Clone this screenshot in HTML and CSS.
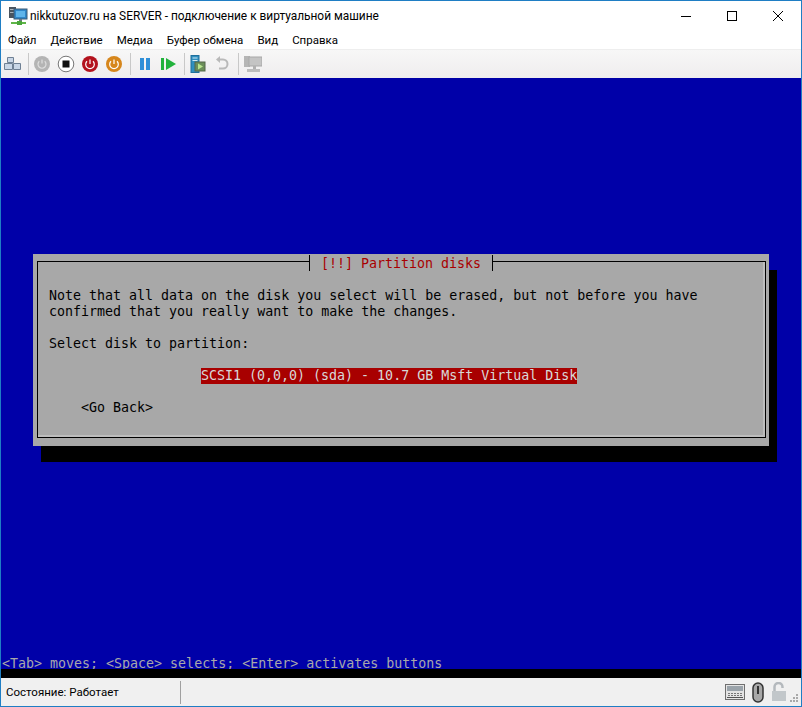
FILE: index.html
```html
<!DOCTYPE html>
<html lang="ru">
<head>
<meta charset="utf-8">
<title>nikkutuzov.ru на SERVER</title>
<link rel="stylesheet" href="styles.css">
</head>
<body>
<div class="window">
  <header class="titlebar">
    <svg class="app-icon" width="20" height="20" viewBox="0 0 20 20">
      <rect x="1" y="1" width="7" height="11" fill="#4a5560"/>
      <rect x="2" y="3" width="5" height="1" fill="#aab4bc"/>
      <rect x="2" y="6" width="5" height="1" fill="#aab4bc"/>
      <rect x="6" y="3" width="13" height="10" fill="#2f86c9" stroke="#3c5a74" stroke-width="1"/>
      <rect x="8" y="5" width="9" height="6" fill="#5fb4ea"/>
      <rect x="11" y="13" width="3" height="3" fill="#6a7884"/>
      <rect x="3" y="16" width="15" height="2" fill="#5fb548"/>
      <rect x="9" y="15" width="5" height="4" fill="#4aa53a"/>
    </svg>
    <span class="title-text">nikkutuzov.ru на SERVER - подключение к виртуальной машине</span>
    <div class="caption">
      <span class="cap-btn"><svg width="12" height="12" viewBox="0 0 12 12"><path d="M1 6.5h10" stroke="#000" fill="none"/></svg></span>
      <span class="cap-btn"><svg width="12" height="12" viewBox="0 0 12 12"><rect x="1.5" y="1.5" width="9" height="9" stroke="#000" fill="none"/></svg></span>
      <span class="cap-btn"><svg width="12" height="12" viewBox="0 0 12 12"><path d="M1 1l10 10M11 1L1 11" stroke="#000" fill="none"/></svg></span>
    </div>
  </header>
  <nav class="menubar">
    <span class="menu-item">Файл</span>
    <span class="menu-item">Действие</span>
    <span class="menu-item">Медиа</span>
    <span class="menu-item">Буфер обмена</span>
    <span class="menu-item">Вид</span>
    <span class="menu-item">Справка</span>
  </nav>
  <div class="toolbar">
    <span class="tool"><svg width="18" height="16" viewBox="0 0 18 16"><path d="M3.5 1.5h6v5h-6zM.5 7.5h8v6h-8zM9.5 7.5h7v6h-7z" fill="#c9d6e6" stroke="#6f8094"/></svg></span>
    <span class="sep sep-tight"></span>
    <span class="tool"><svg width="18" height="18" viewBox="0 0 18 18"><circle cx="9" cy="9" r="8" fill="#b4b4b4"/><path d="M9 4.5v4M6.3 6.3a4 4 0 1 0 5.4 0" stroke="#dedede" stroke-width="1.2" fill="none"/></svg></span>
    <span class="tool"><svg width="18" height="18" viewBox="0 0 18 18"><circle cx="9" cy="9" r="7.8" fill="#fff" stroke="#777" stroke-width="1"/><rect x="5.5" y="5.5" width="7" height="7" fill="#111"/></svg></span>
    <span class="tool"><svg width="18" height="18" viewBox="0 0 18 18"><circle cx="9" cy="9" r="8" fill="#b3121d"/><path d="M9 4.5v4.500M6 6.200a4.300 4.300 0 1 0 6 0" stroke="#fff" stroke-width="1.200" fill="none"/></svg></span>
    <span class="tool"><svg width="18" height="18" viewBox="0 0 18 18"><circle cx="9" cy="9" r="8" fill="#d6861c"/><path d="M9 4.500v4.500M6 6.200a4.300 4.300 0 1 0 6 0" stroke="#fff" stroke-width="1.200" fill="none"/></svg></span>
    <span class="sep"></span>
    <span class="tool"><svg width="12" height="12" viewBox="0 0 12 12"><path d="M1 0h4v12H1zM7 0h4v12H7z" fill="#2f8fd8"/></svg></span>
    <span class="tool"><svg width="16" height="12" viewBox="0 0 16 12"><path d="M0 0h3v12H0zM5 0l10 6-10 6z" fill="#22b23c"/></svg></span>
    <span class="sep sep-tight"></span>
    <span class="tool"><svg width="16" height="18" viewBox="0 0 16 18"><rect x="1" y="0.500" width="8" height="17" fill="#2f8fbf" stroke="#1f6f9c"/><path d="M2.500 3h5M2.500 5.500h5" stroke="#cfe9f5"/><rect x="5" y="7" width="10" height="9" fill="#6c8f5a" stroke="#55664a"/><path d="M8 8.500l5 3-5 3z" fill="#b9e58e"/></svg></span>
    <span class="tool"><svg width="14" height="16" viewBox="0 0 14 16"><path d="M3.500 3.500h4.500a4.500 4.500 0 0 1 0 9H4" stroke="#b9b9b9" stroke-width="2" fill="none"/><path d="M5 0L1 3.500 5 7z" fill="#b9b9b9"/></svg></span>
    <span class="sep"></span>
    <span class="tool"><svg width="18" height="18" viewBox="0 0 18 18"><rect x="0" y="1" width="6" height="11" fill="#b5b5b5"/><rect x="5" y="2" width="13" height="9" fill="#c4c4c4" stroke="#a8a8a8"/><rect x="9" y="11" width="3" height="3" fill="#b0b0b0"/><rect x="3" y="14" width="13" height="3" fill="#bcbcbc"/></svg></span>
  </div>
  <main class="screen">
    <div class="dialog">
      <div class="frame">
        <div class="legend-row"><span class="legend">[!!] Partition disks</span></div>
        <p class="line first-line">Note that all data on the disk you select will be erased, but not before you have</p>
        <p class="line">confirmed that you really want to make the changes.</p>
        <p class="line gap">Select disk to partition:</p>
        <div class="choice-row"><span class="choice">SCSI1 (0,0,0) (sda) - 10.7 GB Msft Virtual Disk</span></div>
        <p class="line back">&lt;Go Back&gt;</p>
      </div>
    </div>
    <p class="hint">&lt;Tab&gt; moves; &lt;Space&gt; selects; &lt;Enter&gt; activates buttons</p>
    <div class="console-end"></div>
  </main>
  <footer class="statusbar">
    <span class="status-text">Состояние: Работает</span>
    <span class="status-sep"></span>
    <div class="status-icons">
      <svg width="20" height="16" viewBox="0 0 20 16"><rect x="0.500" y="0.500" width="19" height="15" fill="#e4e4e4" stroke="#6f6f6f"/><rect x="2" y="2" width="16" height="5" fill="#9aa3aa"/><path d="M3 9.500h14M3 11.500h14" stroke="#777" stroke-dasharray="2 1"/><rect x="2" y="13" width="16" height="1" fill="#555"/></svg>
      <svg class="mouse" width="12" height="21" viewBox="0 0 12 21"><rect x="1" y="1" width="10" height="19" rx="5" fill="#a8a8a8" stroke="#333" stroke-width="1.500"/><rect x="5" y="4" width="2" height="8" fill="#333"/></svg>
      <svg class="lock" width="16" height="20" viewBox="0 0 16 20"><path d="M3.500 9V5a4 4 0 0 1 8 0v1" stroke="#b4b9bd" stroke-width="2.500" fill="none"/><rect x="1" y="9" width="14" height="10" fill="#c2c7ca"/></svg>
      <svg class="grip" width="10" height="10" viewBox="0 0 10 10"><path d="M7 1h2v2H7zM4 4h2v2H4zM7 4h2v2H7zM1 7h2v2H1zM4 7h2v2H4zM7 7h2v2H7z" fill="#a9a9a9"/></svg>
    </div>
  </footer>
</div>
</body>
</html>
```
FILE: styles.css
```css
* { box-sizing: border-box; }
html, body { margin: 0; padding: 0; background: #fff; }
body { font-family: Roboto, "Open Sans", sans-serif; }

.window {
  width: 802px;
  height: 707px;
  display: flex;
  flex-direction: column;
  border: 1px solid #1f7ec4;
  overflow: hidden;
}

.titlebar {
  height: 29px;
  flex: none;
  display: flex;
  align-items: center;
  background: #fff;
  padding-left: 7px;
}
.app-icon { flex: none; margin-right: 2px; }
.title-text { font-size: 11.9px; color: #000; white-space: nowrap; }
.caption { margin-left: auto; display: flex; align-items: flex-start; height: 29px; }
.cap-btn { width: 46px; height: 29px; display: flex; align-items: center; justify-content: center; }

.menubar {
  height: 20px;
  flex: none;
  display: flex;
  align-items: center;
  background: #fff;
  border-bottom: 1px solid #eeeeee;
  font-size: 11.5px;
  color: #000;
  padding-left: 7px;
}
.menu-item { margin-right: 14px; white-space: nowrap; }

.toolbar {
  height: 28px;
  flex: none;
  display: flex;
  align-items: center;
  background: linear-gradient(#f7f7f7, #efedee);
}
.tool { width: 24px; height: 24px; display: flex; align-items: center; justify-content: center; flex: none; }
.sep { width: 1px; height: 22px; background: #c8c8c8; margin: 0 2px 0 4px; flex: none; }
.sep-tight { margin: 0 1px 0 3px; }

.screen {
  height: 600px;
  flex: none;
  display: flex;
  flex-direction: column;
  background: #0000a8;
  font-family: "DejaVu Sans Mono", "Liberation Mono", monospace;
  font-size: 13.3px;
  line-height: 16px;
  color: #a8a8a8;
  overflow: hidden;
}

.dialog {
  width: 736px;
  height: 192px;
  flex: none;
  margin: 176px 0 0 32px;
  padding: 7px 3px 8px 4px;
  background: #a8a8a8;
  box-shadow: 8px 16px 0 #000;
  color: #000;
}
.frame {
  height: 100%;
  border: 1px solid #000;
  box-shadow: inset -2px -2px 0 #bdbdbd;
  padding: 0 11px;
}
.legend-row { display: flex; justify-content: center; margin-top: -7px; height: 16px; margin-left: -1px; }
.legend {
  width: 184px;
  height: 16px;
  padding-top: 1px;
  text-align: center;
  color: #a80000;
  background: #a8a8a8;
  border-left: 1px solid #000;
  border-right: 1px solid #000;
  white-space: pre;
}
.line { margin: 0; height: 16px; white-space: pre; }
.first-line { margin-top: 17px; }
.gap { margin-top: 16px; }
.choice-row { margin: 16px 0 0 152px; height: 16px; }
.choice { display: inline-block; background: #a80000; color: #d8d8d8; white-space: pre; }
.back { margin: 16px 0 0 32px; }

.hint { margin: auto 0 0 1px; height: 16px; line-height: 22px; color: #a8a8a8; white-space: pre; }
.console-end { height: 9px; flex: none; background: #000; }

.statusbar {
  flex: 1;
  display: flex;
  align-items: center;
  background: #f0f0f0;
  font-size: 11.5px;
  color: #000;
  padding-left: 5px;
}
.status-text { width: 174px; flex: none; white-space: nowrap; }
.status-sep { width: 1px; height: 23px; background: #a0a0a0; flex: none; }
.status-icons { margin-left: auto; display: flex; align-items: center; padding-right: 2px; }
.mouse { margin-left: 7px; }
.lock { margin-left: 7px; }
.grip { margin: 12px 0 0 2px; }
```
